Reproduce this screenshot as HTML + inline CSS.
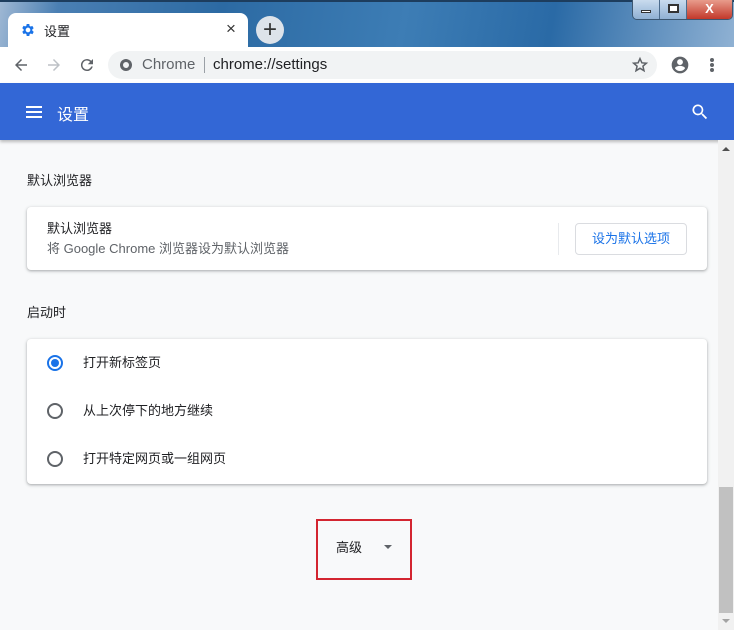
<!DOCTYPE html>
<html><head><meta charset="utf-8"><style>
*{margin:0;padding:0;box-sizing:border-box}
body{width:734px;height:630px;overflow:hidden;position:relative;font-family:"Liberation Sans","Noto Sans CJK SC",sans-serif;background:#f8f9fa;font-size:13px;color:#202124}
.abs{position:absolute}
</style></head><body>
<div class="abs" style="left:0;top:0;width:734px;height:47px;background:linear-gradient(100deg,#9fb8d4 0%,#4a7fb3 8%,#2c6aa3 30%,#3d7db5 55%,#2a6aa6 75%,#8fb1d3 100%)"></div>
<div class="abs" style="left:0;top:0;width:734px;height:2px;background:#1d3d5e"></div>
<div class="abs" style="left:632px;top:0;width:101px;height:20px;border:1px solid #3b5670;border-top:none;border-radius:0 0 5px 5px;overflow:hidden;display:flex">
<div style="width:27px;background:linear-gradient(#c9dbee,#8fb0d3);border-right:1px solid #4b6b8c;position:relative"><div class="abs" style="left:8px;top:10px;width:10px;height:3px;background:#fff;border:1px solid #333"></div></div>
<div style="width:27px;background:linear-gradient(#c9dbee,#8fb0d3);border-right:1px solid #4b6b8c;position:relative"><div class="abs" style="left:8px;top:4px;width:11px;height:9px;border:2px solid #333;background:#fff"></div></div>
<div style="flex:1;background:linear-gradient(#e89c8c,#c2382a);color:#fff;font-weight:bold;text-align:center;font-size:13px;line-height:18px">X</div>
</div>
<div class="abs" style="left:8px;top:13px;width:240px;height:34px;background:#fff;border-radius:8px 8px 0 0"></div>
<svg class="abs" style="left:20px;top:22px" width="16" height="16" viewBox="0 0 24 24"><path fill="#1a73e8" d="M19.4 13a7.5 7.5 0 0 0 0-2l2.1-1.6-2-3.5-2.5 1a7 7 0 0 0-1.7-1L15 3h-4l-.4 2.7a7 7 0 0 0-1.7 1l-2.5-1-2 3.5L6.5 11a7.5 7.5 0 0 0 0 2l-2.1 1.6 2 3.5 2.5-1a7 7 0 0 0 1.7 1L11 21h4l.4-2.7a7 7 0 0 0 1.7-1l2.5 1 2-3.5zM13 15.5a3.5 3.5 0 1 1 0-7 3.5 3.5 0 0 1 0 7z" transform="translate(-1 0)"/></svg>
<div class="abs" style="left:44px;top:21px;font-size:13px">设置</div>
<div class="abs" style="left:226px;top:19px;font-size:17px;color:#333">×</div>
<div class="abs" style="left:256px;top:16px;width:28px;height:28px;border-radius:50%;background:#dde3ea;text-align:center;line-height:27px;font-size:24px;color:#333">+</div>
<div class="abs" style="left:0;top:47px;width:734px;height:36px;background:#fff"></div>
<svg class="abs" style="left:12px;top:56px" width="18" height="18" viewBox="0 0 24 24"><path d="M20 11H7.8l5.6-5.6L12 4l-8 8 8 8 1.4-1.4L7.8 13H20z" fill="#5f6368"/></svg>
<svg class="abs" style="left:45px;top:56px" width="18" height="18" viewBox="0 0 24 24"><path d="M4 11h12.2l-5.6-5.6L12 4l8 8-8 8-1.4-1.4 5.6-5.6H4z" fill="#bdc1c6"/></svg>
<svg class="abs" style="left:78px;top:56px" width="18" height="18" viewBox="0 0 24 24"><path d="M17.6 6.4A8 8 0 1 0 19.7 14h-2.1a6 6 0 1 1-1.4-6.2L13 11h7V4z" fill="#5f6368"/></svg>
<div class="abs" style="left:108px;top:51px;width:549px;height:28px;background:#f1f3f4;border-radius:14px"></div>
<div class="abs" style="left:120px;top:59px;width:12px;height:12px;border-radius:50%;background:#5f6368"><div class="abs" style="left:3px;top:3px;width:6px;height:6px;border-radius:50%;background:#f1f3f4"></div></div>
<div class="abs" style="left:142px;top:56px;font-size:15px;color:#5f6368">Chrome</div>
<div class="abs" style="left:204px;top:57px;width:1px;height:16px;background:#9aa0a6"></div>
<div class="abs" style="left:213px;top:56px;font-size:15px;color:#202124">chrome://settings</div>
<svg class="abs" style="left:631px;top:56px" width="18" height="18" viewBox="0 0 24 24"><path fill="none" stroke="#5f6368" stroke-width="2" d="M12 3.5l2.5 5.6 6 .5-4.6 4 1.4 6-5.3-3.2-5.3 3.2 1.4-6-4.6-4 6-.5z"/></svg>
<svg class="abs" style="left:670px;top:55px" width="20" height="20" viewBox="0 0 24 24"><path fill="#5f6368" d="M12 2a10 10 0 1 0 0 20 10 10 0 0 0 0-20zm0 3a3.5 3.5 0 1 1 0 7 3.5 3.5 0 0 1 0-7zm0 14.2a7.5 7.5 0 0 1-6-3.2c0-2 4-3 6-3s6 1 6 3a7.5 7.5 0 0 1-6 3.2z"/></svg>
<div class="abs" style="left:710px;top:58px;width:4px;height:4px;border-radius:50%;background:#5f6368;box-shadow:0 5px 0 #5f6368,0 10px 0 #5f6368"></div>
<div class="abs" style="left:0;top:83px;width:734px;height:57px;background:#3367d6;box-shadow:0 2px 3px rgba(0,0,0,.25)"></div>
<div class="abs" style="left:26px;top:106px;width:16px;height:2px;background:#fff;box-shadow:0 5px 0 #fff,0 10px 0 #fff"></div>
<div class="abs" style="left:57px;top:101px;font-size:16px;color:#fff">设置</div>
<svg class="abs" style="left:690px;top:102px" width="20" height="20" viewBox="0 0 24 24"><path fill="#fff" d="M15.5 14h-.8l-.3-.3A6.5 6.5 0 1 0 9.5 16a6.5 6.5 0 0 0 4.2-1.6l.3.3v.8l5 5 1.5-1.5zm-6 0a4.5 4.5 0 1 1 0-9 4.5 4.5 0 0 1 0 9z"/></svg>
<div class="abs" style="left:718px;top:140px;width:16px;height:490px;background:#f1f1f1"></div>
<div class="abs" style="left:722px;top:147px;border:4px solid transparent;border-bottom:4px solid #505050;border-top:none"></div>
<div class="abs" style="left:719px;top:487px;width:14px;height:126px;background:#c1c1c1"></div>
<div class="abs" style="left:722px;top:619px;border:4px solid transparent;border-top:4px solid #a3a3a3;border-bottom:none"></div>
<div class="abs" style="left:27px;top:170px;font-size:13px">默认浏览器</div>
<div class="abs" style="left:27px;top:207px;width:680px;height:63px;background:#fff;border-radius:4px;box-shadow:0 1px 2px rgba(60,64,67,.3),0 1px 3px 1px rgba(60,64,67,.12)"></div>
<div class="abs" style="left:47px;top:218px;font-size:13px">默认浏览器</div>
<div class="abs" style="left:47px;top:238px;font-size:13px;color:#5f6368">将 Google Chrome 浏览器设为默认浏览器</div>
<div class="abs" style="left:558px;top:223px;width:1px;height:32px;background:#e8eaed"></div>
<div class="abs" style="left:575px;top:223px;width:112px;height:32px;border:1px solid #dadce0;border-radius:4px;color:#1a73e8;text-align:center;line-height:29px;font-size:13px">设为默认选项</div>
<div class="abs" style="left:27px;top:302px;font-size:13px">启动时</div>
<div class="abs" style="left:27px;top:339px;width:680px;height:145px;background:#fff;border-radius:4px;box-shadow:0 1px 2px rgba(60,64,67,.3),0 1px 3px 1px rgba(60,64,67,.12)"></div>
<div class="abs" style="left:47px;top:355px;width:16px;height:16px;border:2px solid #1a73e8;border-radius:50%"><div class="abs" style="left:2px;top:2px;width:8px;height:8px;border-radius:50%;background:#1a73e8"></div></div>
<div class="abs" style="left:83px;top:352px">打开新标签页</div>
<div class="abs" style="left:47px;top:403px;width:16px;height:16px;border:2px solid #5f6368;border-radius:50%"></div>
<div class="abs" style="left:83px;top:400px">从上次停下的地方继续</div>
<div class="abs" style="left:47px;top:451px;width:16px;height:16px;border:2px solid #5f6368;border-radius:50%"></div>
<div class="abs" style="left:83px;top:448px">打开特定网页或一组网页</div>
<div class="abs" style="left:316px;top:519px;width:96px;height:61px;border:2px solid #d32530"></div>
<div class="abs" style="left:336px;top:537px">高级</div>
<div class="abs" style="left:384px;top:545px;border:4px solid transparent;border-top:4px solid #5f6368;border-bottom:none"></div>
</body></html>
